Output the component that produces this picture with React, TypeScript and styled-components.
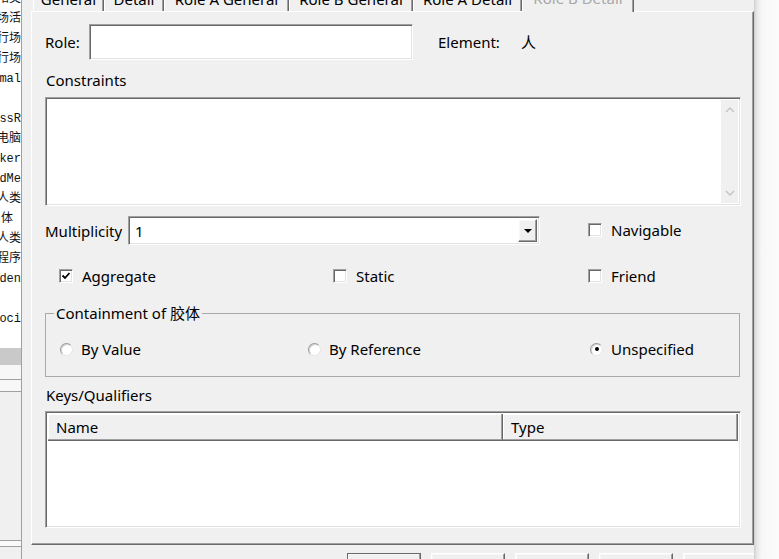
import React from "react";
import styled, { createGlobalStyle, css } from "styled-components";

const GlobalStyle = createGlobalStyle`
  html, body { margin: 0; padding: 0; background: #fff; overflow: hidden; }
  * { box-sizing: border-box; }
`;

const UI_FONT = `"Noto Sans", "Noto Sans CJK SC", sans-serif`;

const sunken = css`
  border: 1px solid;
  border-color: #a0a0a0 #ffffff #ffffff #a0a0a0;
  box-shadow: inset 1px 1px 0 #696969, inset -1px -1px 0 #e3e3e3;
`;

const raised = css`
  border: 1px solid;
  border-color: #ffffff #696969 #696969 #ffffff;
  box-shadow: inset -1px -1px 0 #a0a0a0, inset 1px 1px 0 #f7f7f7;
`;

const Screen = styled.div`
  width: 779px;
  height: 559px;
  display: flex;
  overflow: hidden;
  background: #fff;
  font-family: ${UI_FONT};
  font-size: 15px;
  color: #000;
`;

/* ---------- background window (tree) ---------- */
const TreeStrip = styled.div`
  width: 21px;
  flex: none;
  display: flex;
  flex-direction: column;
  overflow: hidden;
`;

const TreeList = styled.div`
  height: 348px;
  flex: none;
  background: #fff;
  overflow: hidden;
  display: flex;
  flex-direction: column;
  font-family: "Liberation Mono", "Noto Sans CJK SC", monospace;
  font-size: 12px;
  line-height: 20px;
  color: #111;
`;

const TreeLine = styled.div<{ $pad?: number }>`
  display: flex;
  justify-content: flex-end;
  height: 20px;
  flex: none;
  white-space: nowrap;
  padding-right: ${(p) => p.$pad ?? 0}px;
  &:first-child {
    margin-top: -11px;
  }
`;

const Band = styled.div<{ $h: number; $bg: string }>`
  height: ${(p) => p.$h}px;
  flex: none;
  background: ${(p) => p.$bg};
`;

const BandFill = styled.div`
  flex: 1;
  background: #f0f0f0;
`;

/* ---------- dialog ---------- */
const Dialog = styled.div`
  width: 733px;
  flex: none;
  height: 100%;
  background: #f0f0f0;
  border-left: 1px solid #a0a0a0;
  padding-left: 9px;
  display: flex;
  flex-direction: column;
`;

const TabStrip = styled.div`
  display: flex;
  align-items: flex-end;
  height: 23px;
  flex: none;
  margin-top: -12px;
  padding-left: 2px;
  position: relative;
  z-index: 1;
`;

const Tab = styled.div<{ $w: number; $active?: boolean }>`
  width: ${(p) => p.$w}px;
  flex: none;
  height: ${(p) => (p.$active ? 25 : 23)}px;
  margin-bottom: ${(p) => (p.$active ? -1 : 0)}px;
  padding-top: 1px;
  line-height: 20px;
  text-align: center;
  white-space: nowrap;
  background: #f0f0f0;
  border-left: 1px solid #fff;
  border-right: 1px solid #696969;
  box-shadow: inset -1px 0 0 #a0a0a0;
  color: ${(p) => (p.$active ? "#a8a8a8" : "#000")};
`;

const Panel = styled.div`
  width: 723px;
  height: 534px;
  flex: none;
  border-top: 1px solid #fff;
  border-left: 1px solid #fff;
  border-right: 1px solid #696969;
  border-bottom: 1px solid #696969;
  box-shadow: inset -1px -1px 0 #a0a0a0;
  padding: 0 12px 0 13px;
  display: flex;
  flex-direction: column;
`;

const RoleRow = styled.div`
  display: flex;
  align-items: center;
  height: 36px;
  margin-top: 12px;
  flex: none;
`;

const FieldLabel = styled.div<{ $w: number }>`
  width: ${(p) => p.$w}px;
  flex: none;
  white-space: nowrap;
  line-height: 20px;
`;

const ElementLabel = styled(FieldLabel)`
  margin-left: 25px;
`;

const ElementValue = styled.div`
  font-family: "Noto Sans CJK SC", sans-serif;
  font-size: 15px;
  line-height: 20px;
`;

const TextField = styled.div<{ $w: number }>`
  width: ${(p) => p.$w}px;
  height: 100%;
  flex: none;
  background: #fff;
  ${sunken};
`;

const SectionLabel = styled.div<{ $mt: number }>`
  margin-top: ${(p) => p.$mt}px;
  height: 20px;
  line-height: 20px;
  flex: none;
  padding-left: 1px;
`;

const MemoBox = styled.div`
  margin-top: 7px;
  width: 696px;
  height: 109px;
  flex: none;
  background: #fff;
  display: flex;
  ${sunken};
  padding: 2px;
`;

const MemoText = styled.div`
  flex: 1;
`;

const ScrollTrack = styled.div`
  width: 17px;
  flex: none;
  background: #f0f0f0;
  display: flex;
  flex-direction: column;
  justify-content: space-between;
`;

const ScrollArrow = styled.div`
  height: 20px;
  display: flex;
  align-items: center;
  justify-content: center;
`;

const MultRow = styled.div`
  display: flex;
  align-items: center;
  height: 29px;
  margin-top: 10px;
  flex: none;
`;

const Combo = styled.div`
  width: 412px;
  height: 100%;
  flex: none;
  display: flex;
  background: #fff;
  ${sunken};
  padding: 2px;
`;

const ComboText = styled.div`
  flex: 1;
  padding-left: 4px;
  line-height: 24px;
`;

const ComboButton = styled.div`
  width: 19px;
  flex: none;
  height: 100%;
  background: #f0f0f0;
  display: flex;
  align-items: center;
  justify-content: center;
  ${raised};
`;

const NavSlot = styled.div`
  margin-left: 48px;
`;

const CheckGrid = styled.div`
  display: grid;
  grid-template-columns: 274px 255px auto;
  align-items: center;
  height: 18px;
  margin-top: 22px;
  padding-left: 14px;
  flex: none;
`;

const CheckLabel = styled.label`
  display: inline-flex;
  align-items: center;
  gap: 9px;
  height: 18px;
  line-height: 20px;
  white-space: nowrap;
`;

const CheckBox = styled.span`
  width: 14px;
  height: 14px;
  flex: none;
  background: #fff;
  display: flex;
  align-items: center;
  justify-content: center;
  ${sunken};
`;

const Group = styled.fieldset`
  margin: 18px 1px 0 0;
  padding: 0;
  border: 1px solid #a9a9a9;
  flex: none;
  min-width: 0;
`;

const GroupLegend = styled.legend`
  margin-left: 8px;
  padding: 0 2px;
  line-height: 20px;
  height: 20px;
  white-space: nowrap;
`;

const RadioGrid = styled.div`
  display: grid;
  grid-template-columns: 248px 282px auto;
  align-items: center;
  height: 18px;
  margin: 17px 0 18px 0;
  padding-left: 14px;
`;

const RadioLabel = styled.label`
  display: inline-flex;
  align-items: center;
  gap: 8px;
  height: 18px;
  line-height: 20px;
  white-space: nowrap;
`;

const RadioCircle = styled.span`
  width: 13px;
  height: 13px;
  flex: none;
  border-radius: 50%;
  background: #fff;
  border: 1px solid;
  border-color: #9a9a9a #e6e6e6 #e6e6e6 #9a9a9a;
  box-shadow: inset 1px 1px 0 #d4d4d4;
  display: flex;
  align-items: center;
  justify-content: center;
`;

const RadioDot = styled.span`
  width: 4px;
  height: 4px;
  border-radius: 50%;
  background: #000;
`;

const ListBox = styled.div`
  margin-top: 6px;
  width: 696px;
  height: 117px;
  flex: none;
  background: #fff;
  ${sunken};
  padding: 2px;
  display: flex;
  flex-direction: column;
`;

const ListHeader = styled.div`
  display: grid;
  grid-template-columns: 455px 1fr;
  height: 27px;
  flex: none;
`;

const HeaderCell = styled.div`
  background: #f0f0f0;
  border-right: 1px solid #696969;
  border-bottom: 1px solid #696969;
  box-shadow: inset -1px -1px 0 #a0a0a0, inset 1px 1px 0 #fff;
  padding-left: 8px;
  line-height: 26px;
  white-space: nowrap;
`;

const ButtonRow = styled.div`
  display: flex;
  gap: 10px;
  padding: 8px 0 0 316px;
  flex: none;
`;

const DlgButton = styled.div<{ $default?: boolean }>`
  width: 74px;
  height: 23px;
  flex: none;
  background: #f0f0f0;
  ${raised};
  ${(p) =>
    p.$default &&
    css`
      border-color: #696969;
    `}
`;

const Backdrop = styled.div`
  flex: 1;
  height: 100%;
  background: linear-gradient(to right, #cfcfcf 0, #e9e9e9 3px, #f7f7f7 8px, #fcfcfc 100%);
`;

/* ---------- icons ---------- */
const ChevronIcon = ({ up }: { up?: boolean }) => (
  <svg width="10" height="6" viewBox="0 0 10 6">
    <polyline
      points={up ? "1,5 5,1 9,5" : "1,1 5,5 9,1"}
      fill="none"
      stroke="#c2c2c2"
      strokeWidth="1.3"
    />
  </svg>
);

const DropArrow = () => (
  <svg width="8" height="4" viewBox="0 0 8 4">
    <polygon points="0,0 8,0 4,4" fill="#000" />
  </svg>
);

const CheckMark = () => (
  <svg width="10" height="10" viewBox="0 0 10 10">
    <polyline points="1.5,4.5 4,7 8.5,2" fill="none" stroke="#000" strokeWidth="1.8" />
  </svg>
);

const Check = ({ label, checked }: { label: string; checked?: boolean }) => (
  <CheckLabel>
    <CheckBox>{checked && <CheckMark />}</CheckBox>
    {label}
  </CheckLabel>
);

const Radio = ({ label, selected }: { label: string; selected?: boolean }) => (
  <RadioLabel>
    <RadioCircle>{selected && <RadioDot />}</RadioCircle>
    {label}
  </RadioLabel>
);

const treeLines: { t: string; pad?: number }[] = [
  { t: "阳类" },
  { t: "场活" },
  { t: "行场" },
  { t: "行场" },
  { t: "mal" },
  { t: "" },
  { t: "ssR" },
  { t: "电脑" },
  { t: "ker" },
  { t: "dMe" },
  { t: "人类" },
  { t: "体", pad: 8 },
  { t: "人类" },
  { t: "程序" },
  { t: "den" },
  { t: "" },
  { t: "oci" },
  { t: "" },
];

const tabs = [
  { label: "General", w: 71 },
  { label: "Detail", w: 60 },
  { label: "Role A General", w: 125 },
  { label: "Role B General", w: 124 },
  { label: "Role A Detail", w: 109 },
  { label: "Role B Detail", w: 112, active: true },
];

export default function App() {
  return (
    <>
      <GlobalStyle />
      <Screen>
        <TreeStrip>
          <TreeList>
            {treeLines.map((l, i) => (
              <TreeLine key={i} $pad={l.pad}>
                {l.t}
              </TreeLine>
            ))}
          </TreeList>
          <Band $h={17} $bg="#c9c9c9" />
          <Band $h={14} $bg="#f7f7f7" />
          <Band $h={1} $bg="#a0a0a0" />
          <Band $h={11} $bg="#f7f7f7" />
          <Band $h={1} $bg="#a0a0a0" />
          <Band $h={148} $bg="#f0f0f0" />
          <Band $h={1} $bg="#a0a0a0" />
          <Band $h={5} $bg="#fafafa" />
          <Band $h={1} $bg="#a0a0a0" />
          <BandFill />
        </TreeStrip>

        <Dialog>
          <TabStrip>
            {tabs.map((t) => (
              <Tab key={t.label} $w={t.w} $active={t.active}>
                {t.label}
              </Tab>
            ))}
          </TabStrip>

          <Panel>
            <RoleRow>
              <FieldLabel $w={44}>Role:</FieldLabel>
              <TextField $w={324} />
              <ElementLabel $w={83}>Element:</ElementLabel>
              <ElementValue>人</ElementValue>
            </RoleRow>

            <SectionLabel $mt={10}>Constraints</SectionLabel>
            <MemoBox>
              <MemoText />
              <ScrollTrack>
                <ScrollArrow>
                  <ChevronIcon up />
                </ScrollArrow>
                <ScrollArrow>
                  <ChevronIcon />
                </ScrollArrow>
              </ScrollTrack>
            </MemoBox>

            <MultRow>
              <FieldLabel $w={83}>Multiplicity</FieldLabel>
              <Combo>
                <ComboText>1</ComboText>
                <ComboButton>
                  <DropArrow />
                </ComboButton>
              </Combo>
              <NavSlot>
                <Check label="Navigable" />
              </NavSlot>
            </MultRow>

            <CheckGrid>
              <Check label="Aggregate" checked />
              <Check label="Static" />
              <Check label="Friend" />
            </CheckGrid>

            <Group>
              <GroupLegend>Containment of 胶体</GroupLegend>
              <RadioGrid>
                <Radio label="By Value" />
                <Radio label="By Reference" />
                <Radio label="Unspecified" selected />
              </RadioGrid>
            </Group>

            <SectionLabel $mt={8}>Keys/Qualifiers</SectionLabel>
            <ListBox>
              <ListHeader>
                <HeaderCell>Name</HeaderCell>
                <HeaderCell>Type</HeaderCell>
              </ListHeader>
            </ListBox>
          </Panel>

          <ButtonRow>
            <DlgButton $default />
            <DlgButton />
            <DlgButton />
            <DlgButton />
            <DlgButton />
          </ButtonRow>
        </Dialog>

        <Backdrop />
      </Screen>
    </>
  );
}
